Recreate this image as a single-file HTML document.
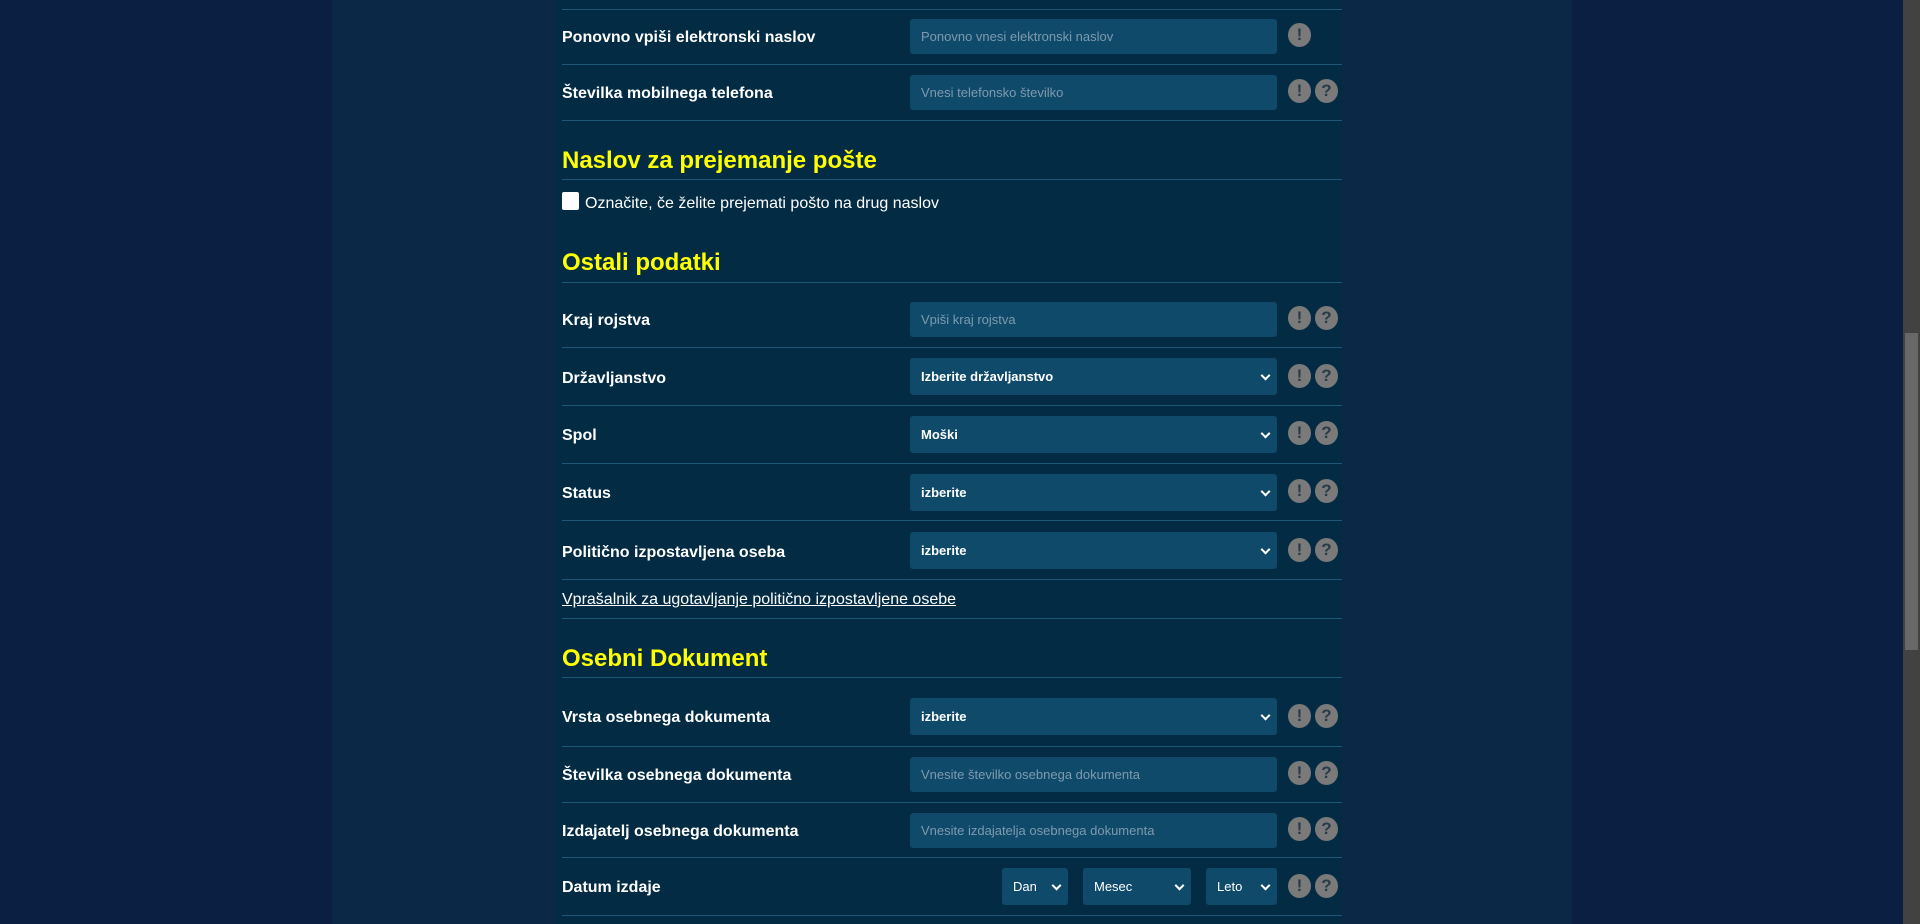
<!DOCTYPE html>
<html><head><meta charset="utf-8"><style>
*{box-sizing:border-box;margin:0;padding:0}
body{width:1920px;height:924px;overflow:hidden;background:#0a1f42;font-family:"Liberation Sans",Arial,sans-serif;position:relative}
.panel{position:absolute;left:332px;top:0;width:1240px;height:924px;background:#0b2846}
.form{position:absolute;left:556px;top:0;width:786px;height:924px;background:#032c44}
.hr{position:absolute;left:562px;width:780px;height:1px;background:#1d5676}
.lbl{position:absolute;left:562px;color:#fff;font-weight:bold;font-size:16px;transform:translateY(-50%);margin-top:2px}
.h{position:absolute;left:562px;color:#ffff00;font-weight:bold;font-size:24px;transform:translateY(-50%);margin-top:1px}
.in{position:absolute;left:910px;width:367px;height:35px;background:#0f4a6b;border-radius:3px;color:#7f9aad;font-size:13px;padding-left:11px;line-height:35px}
.sel{color:#fff;font-weight:bold}
.chev{position:absolute;right:8px;top:50%;width:7px;height:7px;border-right:2px solid #fff;border-bottom:2px solid #fff;transform:translateY(-70%) rotate(45deg)}
.ic{position:absolute;width:23px;height:24px;border-radius:50%;background:#7a7a7a;color:#2a3b48;font-weight:bold;font-size:17px;text-align:center;line-height:24px}
.scroll{position:absolute;left:1903px;top:0;width:17px;height:924px;background:#424242}
.thumb{position:absolute;left:2px;top:333px;width:13px;height:317px;background:#686868}
</style></head><body>
<div class="panel"></div><div class="form"></div>
<div class="scroll"><div class="thumb"></div></div>

<div class="hr" style="top:9px"></div>
<div class="lbl" style="top:36px">Ponovno vpiši elektronski naslov</div>
<div class="in" style="top:19px">Ponovno vnesi elektronski naslov</div>
<div class="ic" style="left:1288px;top:23px">!</div>
<div class="hr" style="top:64px"></div>
<div class="lbl" style="top:92px">Številka mobilnega telefona</div>
<div class="in" style="top:75px">Vnesi telefonsko številko</div>
<div class="ic" style="left:1288px;top:79px">!</div><div class="ic" style="left:1315px;top:79px">?</div>
<div class="hr" style="top:120px"></div>

<div class="h" style="top:160px">Naslov za prejemanje pošte</div>
<div class="hr" style="top:179px"></div>
<div style="position:absolute;left:562px;top:192px;width:17px;height:18px;background:#fff;border-radius:2px"></div>
<div style="position:absolute;left:585px;top:204px;transform:translateY(-50%);color:#fff;font-size:16px">Označite, če želite prejemati pošto na drug naslov</div>

<div class="h" style="top:262px">Ostali podatki</div>
<div class="hr" style="top:282px"></div>
<div class="lbl" style="top:319px">Kraj rojstva</div>
<div class="in" style="top:302px">Vpiši kraj rojstva</div>
<div class="ic" style="left:1288px;top:306px">!</div><div class="ic" style="left:1315px;top:306px">?</div>
<div class="hr" style="top:347px"></div>
<div class="lbl" style="top:377px">Državljanstvo</div>
<div class="in sel" style="top:358px;height:37px;line-height:37px">Izberite državljanstvo<span class="chev"></span></div>
<div class="ic" style="left:1288px;top:364px">!</div><div class="ic" style="left:1315px;top:364px">?</div>
<div class="hr" style="top:405px"></div>
<div class="lbl" style="top:434px">Spol</div>
<div class="in sel" style="top:416px;height:37px;line-height:37px">Moški<span class="chev"></span></div>
<div class="ic" style="left:1288px;top:421px">!</div><div class="ic" style="left:1315px;top:421px">?</div>
<div class="hr" style="top:463px"></div>
<div class="lbl" style="top:492px">Status</div>
<div class="in sel" style="top:474px;height:37px;line-height:37px">izberite<span class="chev"></span></div>
<div class="ic" style="left:1288px;top:479px">!</div><div class="ic" style="left:1315px;top:479px">?</div>
<div class="hr" style="top:520px"></div>
<div class="lbl" style="top:551px">Politično izpostavljena oseba</div>
<div class="in sel" style="top:532px;height:37px;line-height:37px">izberite<span class="chev"></span></div>
<div class="ic" style="left:1288px;top:538px">!</div><div class="ic" style="left:1315px;top:538px">?</div>
<div class="hr" style="top:579px"></div>
<div style="position:absolute;left:562px;top:600px;transform:translateY(-50%);color:#fff;font-size:16px;text-decoration:underline">Vprašalnik za ugotavljanje politično izpostavljene osebe</div>
<div class="hr" style="top:618px"></div>

<div class="h" style="top:658px">Osebni Dokument</div>
<div class="hr" style="top:677px"></div>
<div class="lbl" style="top:716px">Vrsta osebnega dokumenta</div>
<div class="in sel" style="top:698px;height:37px;line-height:37px">izberite<span class="chev"></span></div>
<div class="ic" style="left:1288px;top:704px">!</div><div class="ic" style="left:1315px;top:704px">?</div>
<div class="hr" style="top:746px"></div>
<div class="lbl" style="top:774px">Številka osebnega dokumenta</div>
<div class="in" style="top:757px">Vnesite številko osebnega dokumenta</div>
<div class="ic" style="left:1288px;top:761px">!</div><div class="ic" style="left:1315px;top:761px">?</div>
<div class="hr" style="top:802px"></div>
<div class="lbl" style="top:830px">Izdajatelj osebnega dokumenta</div>
<div class="in" style="top:813px">Vnesite izdajatelja osebnega dokumenta</div>
<div class="ic" style="left:1288px;top:817px">!</div><div class="ic" style="left:1315px;top:817px">?</div>
<div class="hr" style="top:857px"></div>
<div class="lbl" style="top:886px">Datum izdaje</div>
<div class="in sel" style="left:1002px;width:66px;top:868px;height:37px;line-height:37px;font-weight:normal">Dan<span class="chev"></span></div>
<div class="in sel" style="left:1083px;width:108px;top:868px;height:37px;line-height:37px;font-weight:normal">Mesec<span class="chev"></span></div>
<div class="in sel" style="left:1206px;width:71px;top:868px;height:37px;line-height:37px;font-weight:normal">Leto<span class="chev"></span></div>
<div class="ic" style="left:1288px;top:874px">!</div><div class="ic" style="left:1315px;top:874px">?</div>
<div class="hr" style="top:915px"></div>
</body></html>
